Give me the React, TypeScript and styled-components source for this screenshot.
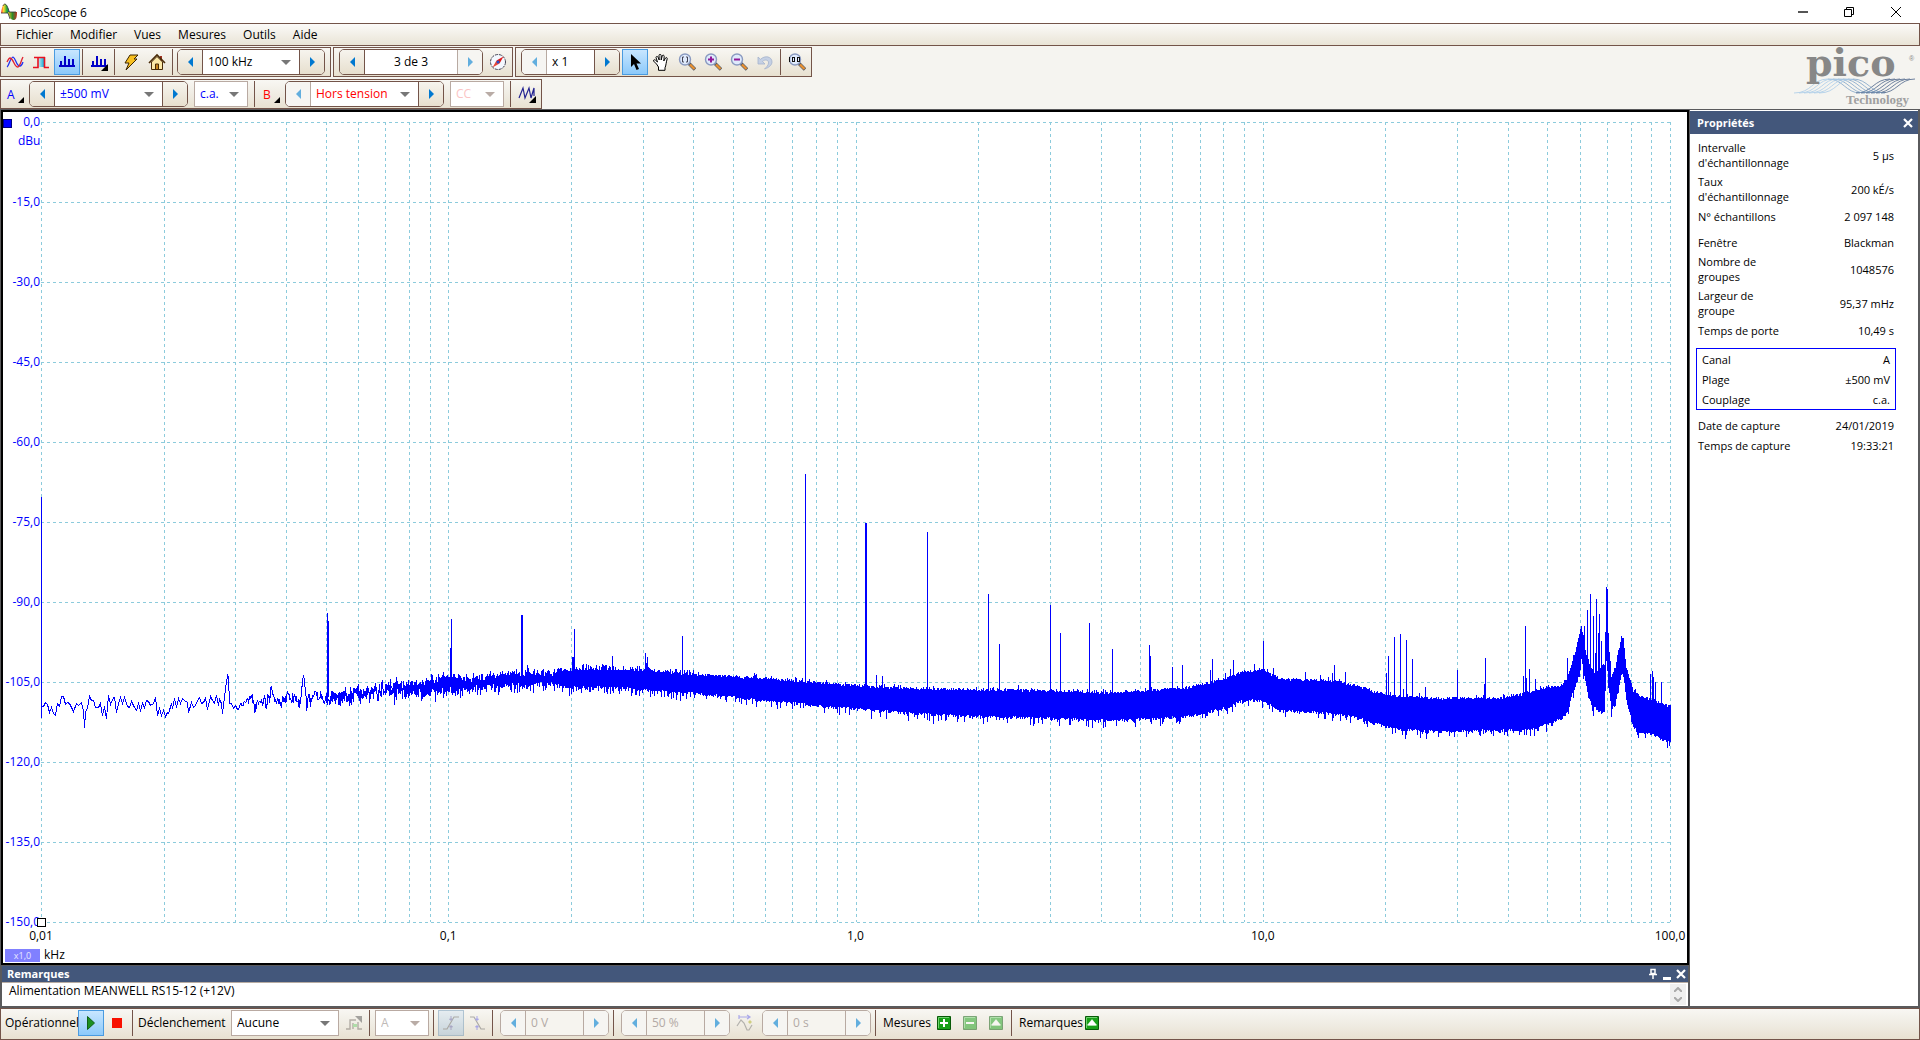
import React from 'react';
import styled, { createGlobalStyle, css } from 'styled-components';

const color = {
  line: '#735449',
  soft: '#b8aaa2',
  blue: '#0000ff',
  red: '#ff0000',
  header: '#43577b',
  frame: '#5a5a5c',
  arrow: '#0078d0',
  arrowOff: '#62aede',
};

const GlobalStyle = createGlobalStyle`
  * { box-sizing: border-box; }
  body { margin: 0; background: #f5f4f0; }
  body, button, input, select, textarea {
    font-family: "Segoe UI", "Open Sans", "Noto Sans", sans-serif;
    font-size: 12px;
    line-height: 16px;
    color: #000;
  }
  button, input, select, textarea { margin: 0; border: 0; padding: 0; background: none; border-radius: 0; }
  svg { display: block; }
`;

const barFill = css`
  background: linear-gradient(#f8f7f3, #eeeae0 60%, #e8e1d0);
`;

/* ---------- window frame ---------- */

const Window = styled.div`
  height: 100vh;
  min-height: 600px;
  display: flex;
  flex-direction: column;
`;

const TitleBar = styled.header`
  display: flex;
  align-items: center;
  height: 23px;
  background: #fff;
`;

const Title = styled.h1`
  flex: 1;
  margin: 0;
  padding: 2px 0 0 3px;
  font-size: 12px;
  font-weight: 400;
`;

const WindowButton = styled.button`
  display: grid;
  place-items: center;
  width: 46px;
  height: 22px;

  &:last-child { width: 48px; }
`;

const MenuBar = styled.nav`
  display: flex;
  height: 23px;
  padding-left: 6px;
  border: 1px solid ${color.line};
  background: linear-gradient(#fbfaf8, #e9e4d6);
`;

const MenuItem = styled.button`
  padding: 0 8px 0 9px;
`;

/* ---------- toolbars ---------- */

const ToolArea = styled.div`
  display: flex;
  justify-content: space-between;
  height: 63px;
  padding-top: 1px;
`;

const ToolRows = styled.div`
  display: flex;
  flex-direction: column;
  gap: 2px;
`;

const ToolRow = styled.div`
  display: flex;
  gap: 2px;
`;

const Toolbar = styled.div`
  ${barFill}
  display: flex;
  align-items: center;
  height: 30px;
  padding: 0 1px;
  border: 1px solid ${color.line};
`;

const ToolPad = styled.i<{ $w?: number }>`
  flex: none;
  width: ${p => p.$w ?? 4}px;
`;

const ToolButton = styled.button<{ $on?: boolean; $dim?: boolean }>`
  flex: none;
  display: grid;
  place-items: center;
  width: 26px;
  height: 26px;
  border: 1px solid ${p => (p.$on ? '#4a9be0' : 'transparent')};
  background: ${p => (p.$on ? 'linear-gradient(#c8e6ff, #8cc9fa)' : 'none')};
  opacity: ${p => (p.$dim ? 0.5 : 1)};
  filter: ${p => (p.$dim && p.$on ? 'saturate(0.5)' : 'none')};
`;

const ChannelButton = styled.button<{ $ink: string }>`
  display: flex;
  align-items: flex-end;
  gap: 3px;
  width: 27px;
  height: 26px;
  padding: 4px 0 4px 5px;
  color: ${p => p.$ink};
`;

const Corner = styled.i`
  border-left: 6px solid transparent;
  border-bottom: 6px solid #000;
`;

const Separator = styled.i<{ $after?: number }>`
  flex: none;
  width: 1px;
  height: 26px;
  margin: 0 ${p => p.$after ?? 3}px 0 2px;
  background: ${color.line};
`;

const StepperBox = styled.div<{ $w: number; $dim?: boolean }>`
  flex: none;
  display: flex;
  width: ${p => p.$w}px;
  height: 26px;
  margin-right: 2px;
  border: 1px solid ${p => (p.$dim ? color.soft : color.line)};
  border-radius: 5px;
  background: ${p => (p.$dim ? '#f6f4ef' : '#fff')};
  overflow: hidden;
`;

const StepButton = styled.button<{ $flip?: boolean; $dim?: boolean }>`
  flex: none;
  display: grid;
  place-items: center;
  width: 25px;
  background: ${p => (p.$dim ? '#f6f5f2' : 'linear-gradient(#f6f4ee, #e7dfce)')};
  border-${p => (p.$flip ? 'left' : 'right')}: 1px solid ${p => (p.$dim ? color.soft : color.line)};

  &::before {
    content: '';
    border: 5px solid transparent;
    border-${p => (p.$flip ? 'left' : 'right')}-color: ${p => (p.$dim ? color.arrowOff : color.arrow)};
    border-${p => (p.$flip ? 'right' : 'left')}-width: 0;
  }
`;

const Value = styled.input<{ $center?: boolean }>`
  flex: 1;
  min-width: 0;
  padding: 0 5px;
  text-align: ${p => (p.$center ? 'center' : 'left')};
  &:disabled { color: #b3aaa6; }
`;

const SelectShell = styled.div<{ $w?: number; $dim?: boolean }>`
  position: relative;
  display: flex;
  flex: ${p => (p.$w ? 'none' : '1')};
  width: ${p => (p.$w ? `${p.$w}px` : 'auto')};
  height: ${p => (p.$w ? '26px' : 'auto')};
  border: ${p => (p.$w ? '1px solid #b9aaa2' : '0')};
  background: #fff;

  &::after {
    content: '';
    position: absolute;
    right: 8px;
    top: 10px;
    border: 5px solid transparent;
    border-top-color: ${p => (p.$dim ? '#b9aca6' : '#777')};
    border-bottom-width: 0;
    pointer-events: none;
  }
`;

const Select = styled.select<{ $ink?: string }>`
  appearance: none;
  flex: 1;
  min-width: 0;
  padding: 0 20px 0 5px;
  color: ${p => p.$ink || '#000'};
  opacity: 1;
`;

const Logo = styled.svg`
  width: 130px;
  height: 60px;
  overflow: visible;
`;

/* ---------- workspace ---------- */

const Workspace = styled.main`
  flex: 1;
  min-height: 0;
  display: grid;
  grid-template-columns: minmax(0, 1fr) 228px;
  gap: 1px;
  padding: 1px 2px 2px 1px;
  background: ${color.frame};
`;

const ScopeColumn = styled.div`
  display: flex;
  flex-direction: column;
  gap: 1px;
  min-height: 0;
`;

const ScopeView = styled.section`
  flex: 1;
  min-height: 0;
  position: relative;
  display: grid;
  grid-template-columns: 38px minmax(0, 1fr) 17px;
  grid-template-rows: 10px minmax(0, 1fr) 41px;
  border: 2px solid #000;
  background: #fff;
`;

const YAxis = styled.div`
  grid-area: 2 / 1;
  display: flex;
  flex-direction: column;
  justify-content: space-between;
  align-items: flex-end;
  padding-right: 1px;
  color: ${color.blue};
`;

const YTick = styled.span`
  display: flex;
  align-items: center;
  height: 0;
`;

const YUnit = styled.span`
  position: absolute;
  left: 15px;
  top: 21px;
  color: ${color.blue};
`;

const PlotCell = styled.div`
  grid-area: 2 / 2;
  position: relative;
  min-height: 0;
`;

const Plot = styled.svg`
  width: 100%;
  height: 100%;
  overflow: visible;
`;

const ChannelMark = styled.i`
  position: absolute;
  left: 0;
  top: 7px;
  width: 9px;
  height: 9px;
  border: 1px solid #000080;
  background: ${color.blue};
`;

const OriginMark = styled.i`
  position: absolute;
  left: -4px;
  bottom: -5px;
  width: 9px;
  height: 9px;
  border: 1px solid #000;
  background: #fff;
`;

const XAxis = styled.div`
  grid-area: 3 / 2;
  display: flex;
  justify-content: space-between;
  padding-top: 6px;
`;

const XTick = styled.span`
  display: flex;
  justify-content: center;
  width: 0;
`;

const XUnit = styled.div`
  grid-area: 3 / 1 / 4 / 3;
  align-self: end;
  display: flex;
  align-items: center;
  gap: 4px;
  padding-left: 2px;
`;

const Factor = styled.button`
  width: 35px;
  height: 13px;
  background: #8080ff;
  color: #e8e8ff;
  font-size: 9px;
  line-height: 13px;
`;

const Notes = styled.section`
  flex: none;
  margin: 0 1px;
`;

const PaneHeader = styled.div<{ $h: number; $pad: number }>`
  display: flex;
  align-items: center;
  justify-content: space-between;
  height: ${p => p.$h}px;
  padding: 0 0 0 ${p => p.$pad}px;
  background: ${color.header};
  color: #fff;
`;

const PaneTitle = styled.h2`
  margin: 0;
  font-size: 11px;
  font-weight: 700;
`;

const PaneButtons = styled.div`
  display: flex;
`;

const PaneButton = styled.button`
  display: grid;
  place-items: center;
  width: 14px;
  height: 14px;
`;

const NotesBody = styled.div`
  display: flex;
  height: 24px;
  border-top: 1px solid #b8aca2;
  background: #fff;
`;

const NotesText = styled.textarea`
  flex: 1;
  height: 22px;
  padding: 0 7px;
  resize: none;
  overflow: hidden;
`;

const Scroller = styled.div`
  display: flex;
  flex-direction: column;
  justify-content: space-between;
  width: 16px;
  margin: 1px 2px 1px 0;
  background: #f0f0f0;
`;

const ScrollButton = styled.button`
  display: grid;
  place-items: center;
  height: 11px;
`;

const Properties = styled.aside`
  padding-top: 1px;
  background: #fff;
`;

const PropList = styled.dl`
  margin: 0;
  padding: 4px 0 0 6px;
  width: 206px;
  font-size: 11px;
  line-height: 15px;
`;

const PropGroup = styled.div<{ $boxed?: boolean; $gap: number }>`
  margin-top: ${p => p.$gap}px;
  padding: ${p => (p.$boxed ? '0 5px' : '0 2px')};
  border: ${p => (p.$boxed ? `1px solid ${color.blue}` : '0')};
`;

const PropRow = styled.div<{ $tall?: boolean }>`
  display: flex;
  align-items: center;
  justify-content: space-between;
  height: ${p => (p.$tall ? 34 : 20)}px;
`;

const PropName = styled.dt`
  width: 93px;
`;

const PropValue = styled.dd`
  margin: 0;
`;

/* ---------- status bar ---------- */

const StatusBar = styled.footer`
  ${barFill}
  flex: none;
  display: flex;
  align-items: center;
  height: 32px;
  padding: 0 4px 2px;
  border: 1px solid ${color.line};
  white-space: nowrap;
`;

const StatusText = styled.label<{ $w: number }>`
  flex: none;
  width: ${p => p.$w}px;
`;

/* ---------- icons ---------- */

const Icon = ({ size = 18, children }: { size?: number; children: React.ReactNode }) => (
  <svg width={size} height={size} viewBox={`0 0 ${size} ${size}`} fill="none" aria-hidden="true">
    {children}
  </svg>
);

const AppIcon = () => (
  <svg width="17" height="18" viewBox="0 0 17 18" aria-hidden="true">
    <defs>
      <linearGradient id="crest">
        <stop offset="0" stopColor="#f33" />
        <stop offset="0.3" stopColor="#fd3" />
        <stop offset="0.65" stopColor="#2a3" />
        <stop offset="1" stopColor="#1a56c0" />
      </linearGradient>
      <linearGradient id="trough">
        <stop offset="0" stopColor="#e8d020" />
        <stop offset="0.5" stopColor="#2c8a2c" />
        <stop offset="1" stopColor="#c03020" />
      </linearGradient>
    </defs>
    <path d="M1 10C2 4 3 1 5 1s3 4 5 9z" fill="url(#crest)" />
    <path d="M8 9h9c0 6-1 8-3.500 8S9 14 8 9z" fill="url(#trough)" />
    <path d="M1 10h7l2 6M3 3c1-3 3-2 4 0 1 2 2 4 2 6h7" fill="none" stroke="#333" strokeWidth=".8" />
  </svg>
);

const WaveIcon = () => (
  <Icon>
    <path d="M1 14C3 13 4 5 7 4c3 1 3 9 7 9 1 0 2-1 3-4" stroke="#2030f0" strokeWidth="1.300" />
    <path d="M1 9c1-2 2-4 3-4 4 1 4 9 8 9 2-1 3-6 5-10" stroke="#e02030" strokeWidth="1.300" />
  </Icon>
);

const PersistIcon = () => (
  <Icon>
    <defs>
      <linearGradient id="persist">
        <stop offset="0" stopColor="#d8e8f0" />
        <stop offset="1" stopColor="#10b0d8" />
      </linearGradient>
    </defs>
    <path d="M6 4h6v10H6z" fill="url(#persist)" />
    <path d="M1 14.500h5V4M2 4.500h11M12.500 4v10.500H17" stroke="#e81020" strokeWidth="1.600" />
  </Icon>
);

const Bars = ({ menu }: { menu?: boolean }) => (
  <Icon>
    <path
      d="M1 13h16M3 12V8M7 12V3M11 12V6M15 12V6"
      stroke="#0000c8"
      strokeWidth="2"
      shapeRendering="crispEdges"
    />
    {menu && <path d="M18 11v7h-7z" fill="#000" />}
  </Icon>
);

const BoltIcon = () => (
  <Icon>
    <path d="M8 2h8l-4 4h3L4 17l3-7H3z" fill="#f8c020" stroke="#3a2400" />
  </Icon>
);

const HomeIcon = () => (
  <Icon>
    <path d="M13 3v5" stroke="#a03020" strokeWidth="2" />
    <path d="M3.500 9v7.500h11V9L9 3.500z" fill="#fbe9a8" stroke="#4a2c08" />
    <path d="M1 10l8-8 8 8" stroke="#4a2c08" strokeWidth="1.600" />
    <path d="M7.500 16v-5h3v5" fill="#c88820" stroke="#4a2c08" />
  </Icon>
);

const CompassIcon = () => (
  <Icon>
    <circle cx="9" cy="9" r="7.500" fill="#f4f8ff" stroke="#445" strokeWidth="1" strokeDasharray="3 1" />
    <path d="M14.500 3.500l-4 7-3-3z" fill="#e01818" />
    <path d="M3.500 14.500l4-7 3 3z" fill="#e84838" />
    <circle cx="9" cy="9" r="1.500" fill="#2050d0" />
  </Icon>
);

const PointerIcon = () => (
  <Icon>
    <path d="M5 1v13l3-3 2.500 6 2.500-1-2.500-5.500H15z" fill="#000" />
  </Icon>
);

const HandIcon = () => (
  <Icon>
    <path
      d="M4.500 11L1.500 8c0-1.500 1-1.500 2-.8L5.500 9 4 4.500c0-1.200 1.500-1.500 2-.3L7.200 7 7 2.500C7 1 9 1 9.200 2.500V7l1-4c.3-1.300 2-1 2 .3L11.800 8l1.700-3c.8-1 2-.3 1.700.8-1 3-1.200 7-2.200 9v2.500H6.500V14z"
      fill="#fff"
      stroke="#000"
      strokeWidth="1"
    />
  </Icon>
);

const ZoomIcon = ({ kind }: { kind: 'fit' | 'in' | 'out' | 'all' }) => (
  <Icon>
    <path d="M11 10.500l6 6" stroke="#555a66" strokeWidth="3.600" />
    <path d="M12 11.500l4.500 4.500" stroke="#e89030" strokeWidth="2.400" />
    <circle cx="7" cy="6.500" r="5.500" fill="#dfeafc" stroke="#8a9ac0" strokeWidth="1.400" />
    {kind === 'in' && <path d="M4 6.500h6M7 3.500v6" stroke="#901898" strokeWidth="2" />}
    {kind === 'out' && <path d="M4 6.500h6" stroke="#901898" strokeWidth="2" />}
    {kind === 'fit' && <path d="M6 4H4.500v5H6M8 4h1.500v5H8" stroke="#445" />}
    {kind === 'all' && (
      <path
        d="M1.500 4v5M4.500 4.500h2v4h-2zM9.500 4.500h2v4h-2z"
        stroke="#111"
        strokeWidth="1"
        shapeRendering="crispEdges"
      />
    )}
  </Icon>
);

const UndoIcon = () => (
  <Icon>
    <path
      d="M2 4v7h7L6.500 8.500C9 6 13 7 12.500 10c-.2 2.500-2 4-4 6 5-1.500 7.500-4.500 7.500-7 0-5.500-7-7-11.500-2.700z"
      fill="#c5d0e4"
      stroke="#a5b3cc"
      strokeWidth=".8"
    />
  </Icon>
);

const MathIcon = () => (
  <Icon>
    <path d="M1 13L5 3l2 10L11 3l2 10 3-10v8" stroke="#202090" strokeWidth="1.200" />
    <path d="M18 11v7h-7z" fill="#000" />
  </Icon>
);

const PlayIcon = () => (
  <Icon>
    <path d="M5.500 2.500v13l7-6.500z" fill="#1c9020" stroke="#116016" />
  </Icon>
);

const StopIcon = () => (
  <Icon>
    <path d="M4 4h10v10H4z" fill="#f81000" />
  </Icon>
);

const TriggerIcon = () => (
  <Icon>
    <path d="M1 15h4V6h6M8 15V9M13 8v7h4" stroke="#77706a" strokeWidth="1.400" />
    <path d="M10 2h7v7z" fill="#555" />
    <path d="M8 10h4v3H8z" fill="#70d070" />
  </Icon>
);

const EdgeIcon = ({ falling }: { falling?: boolean }) => (
  <Icon>
    <path d={falling ? 'M2 3h4l7 12h4' : 'M1 15h4l7-12h5'} stroke="#666" strokeWidth="1.200" />
    <path d="M9 2v4M9 12v4M7.500 5h3L9 6.500zM7.500 13h3L9 11.500z" fill="#6060e8" stroke="#6060e8" />
  </Icon>
);

const DelayIcon = () => (
  <Icon>
    <path d="M1 12l4-6 3 3 3 7h2l3-5" stroke="#777" strokeWidth="1.200" />
    <path d="M3 3h11M11 1l3 2-3 2M3 1v4" stroke="#6060e8" strokeWidth="1.200" />
    <path d="M12 8l2-2 2 2-2 2z" fill="#b0b020" />
  </Icon>
);

const GreenIcon = ({ kind }: { kind: 'plus' | 'minus' | 'up' }) => (
  <Icon>
    <path d="M2.500 2.500h13v13h-13z" fill="#18a018" stroke="#085a08" />
    <path d="M3.500 14V3.500H14" stroke="#70d070" />
    {kind === 'plus' && <path d="M5 9h8M9 5v8" stroke="#fff" strokeWidth="2" />}
    {kind === 'minus' && <path d="M5 9h8" stroke="#fff" strokeWidth="2" />}
    {kind === 'up' && <path d="M9 5.500l4.500 5.500h-9zM4.500 11.500h9" fill="#fff" stroke="#fff" strokeWidth=".5" />}
  </Icon>
);

const CloseIcon = ({ size = 12 }: { size?: number }) => (
  <svg width={size} height={size} viewBox="0 0 12 12" stroke="#fff" strokeWidth="2.200" aria-hidden="true">
    <path d="M2 2l8 8M10 2l-8 8" />
  </svg>
);

/* ---------- spectrum ---------- */

const PLOT_W = 1629;
const PLOT_H = 800;
const LEFT = 41;
const TOP = 122;
const BAND_START = 385;

/* x, upper edge, lower edge of the noise band */
const band: number[][] = [
  [385, 686, 690], [400, 684, 692], [425, 683, 693], [449, 676, 690], [465, 678, 691], [490, 675, 688],
  [530, 672, 686], [571, 671, 686], [600, 670, 686], [640, 672, 688],
  [695, 676, 692], [750, 679, 698], [804, 683, 703], [857, 687, 708], [914, 690, 712], [969, 691, 715],
  [1051, 692, 717], [1106, 694, 719], [1161, 691, 717], [1188, 689, 715], [1205, 685, 712], [1227, 679, 706],
  [1243, 673, 699], [1262, 671, 699], [1279, 680, 709], [1298, 681, 710], [1331, 682, 712], [1358, 687, 716],
  [1372, 693, 722], [1397, 698, 728], [1435, 700, 730], [1500, 699, 729], [1520, 696, 729], [1540, 690, 725],
  [1560, 687, 718], [1567, 680, 712], [1572, 663, 693], [1577, 645, 680], [1581, 627, 658], [1585, 652, 680],
  [1588, 662, 696], [1593, 675, 706], [1600, 670, 710], [1604, 668, 710], [1606, 630, 660], [1608, 643, 680],
  [1611, 678, 708], [1615, 668, 703], [1618, 653, 687], [1621, 638, 673], [1623, 639, 675], [1626, 670, 700],
  [1633, 692, 726], [1637, 696, 730], [1643, 699, 732], [1653, 701, 733], [1660, 705, 738], [1670, 708, 741],
];

/* x, centre of the single-line trace at the low end */
const centre: number[][] = [
  [237, 703], [286, 698], [326, 697], [367, 693], [388, 688], [428, 687], [449, 682],
];

const lowEnd =
  '41,706 43,706 45,702 47,704 49,712 51,707 53,713 55,715 57,703 59,706 61,696 63,696 65,704 67,702 69,703 73,711 76,703 78,705 81,702 83,710 84,727 85,712 87,707 89,696 91,700 93,700 95,707 98,707 100,703 102,715 104,706 106,718 108,695 110,704 113,697 114,697 116,712 118,703 120,697 122,703 124,697 127,706 129,707 131,701 134,707 136,710 138,703 140,710 142,703 144,707 146,700 148,701 150,705 153,703 155,697 157,715 159,708 161,715 163,710 165,716 167,712 168,713 171,703 172,708 174,698 176,707 178,698 180,703 182,698 184,700 187,702 188,712 191,702 193,707 195,705 197,700 199,697 201,703 203,702 205,698 207,709 210,696 212,700 214,703 216,695 218,705 219,699 221,703 222,713 224,697 225,688 227,675 228,677 229,703 231,703 233,708 235,705';

/* x, peak */
const peaks: number[][] = [
  [451, 619], [450, 648], [521, 615], [522, 615], [527, 665], [574, 629], [573, 657], [572, 657], [612, 656],
  [645, 653], [646, 663], [647, 657], [682, 636], [805, 474], [865, 523], [866, 523], [876, 675], [882, 676],
  [927, 532], [988, 594], [999, 644], [1050, 605], [1060, 633], [1089, 623], [1112, 649], [1149, 645],
  [1150, 656], [1172, 667], [1182, 665], [1210, 670], [1212, 659], [1230, 669], [1233, 660], [1263, 641],
  [1254, 664], [1273, 668], [1305, 672], [1320, 675], [1334, 665], [1332, 673], [1345, 672], [1386, 673],
  [1388, 656], [1394, 637], [1400, 634], [1406, 640], [1412, 659], [1403, 689], [1425, 687], [1457, 670],
  [1484, 684], [1485, 658], [1523, 676], [1525, 626], [1526, 678], [1529, 669], [1535, 679], [1567, 658],
  [1584, 626], [1587, 610], [1590, 594], [1593, 616], [1595, 653], [1596, 599], [1598, 633], [1599, 614],
  [1601, 641], [1605, 632], [1606, 587], [1607, 589], [1608, 633], [1650, 674], [1652, 671], [1653, 677],
  [1655, 682], [1661, 682],
];

function lookup(table: number[][], x: number, column: number) {
  let i = 1;
  while (i < table.length - 1 && table[i][0] < x) i++;
  const a = table[i - 1];
  const b = table[i];
  return a[column] + ((b[column] - a[column]) * (x - a[0])) / (b[0] - a[0]);
}

function makeRandom(seed: number) {
  let s = seed;
  return () => {
    s = (s * 1664525 + 1013904223) % 4294967296;
    return s / 4294967296;
  };
}

function buildTrace() {
  const rnd = makeRandom(20190124);
  const line = lowEnd.split(' ').map(p => {
    const [x, y] = p.split(',').map(Number);
    return `${x - LEFT + 0.5} ${y - TOP + 0.5}`;
  });
  let drift = 0;
  for (let x = 237; x < 449; x += x < 330 ? 0.7 : 0.3) {
    drift = drift * 0.35 + (rnd() + rnd() + rnd() - 1.5) * 8;
    let y = lookup(centre, x, 1) + drift;
    if (rnd() < 0.04) y += 6;
    if (Math.abs(x - 303) < 3) y = 673 + Math.abs(x - 303) * 9;
    line.push(`${(x - LEFT + 0.5).toFixed(1)} ${Math.round(y - TOP) + 0.5}`);
  }
  let columns = 'M.5 375V596M286.500 491V580M287.500 499V575';
  for (let x = BAND_START; x <= 1670; x++) {
    const rough = x < 700;
    let top = lookup(band, x, 1) - rnd() * 3;
    let bottom = lookup(band, x, 2) + rnd() * 3;
    if (rnd() < (rough ? 0.4 : 0.12)) top -= rnd() * 4;
    if (rnd() < (rough ? 0.4 : 0.25)) bottom += rnd() * 8;
    if (x < 560) {
      top += rnd() * 5;
      bottom -= rnd() * 5;
    }
    columns += `M${x - LEFT + 0.5} ${Math.round(top - TOP)}V${Math.round(bottom - TOP)}`;
  }
  peaks.forEach(([x, y]) => {
    columns += `M${x - LEFT + 0.5} ${y - TOP}V${Math.round(lookup(band, x, 1) - TOP) + 6}`;
  });
  return { line: `M${line.join('L')}`, columns };
}

const trace = buildTrace();

const gridX: number[] = [];
for (let d = 0; d < 4; d++) {
  for (let n = 1; n < 10; n++) gridX.push(Math.round((d + Math.log10(n)) * (PLOT_W / 4)));
}
gridX.push(PLOT_W);
const gridPath =
  gridX.map(x => `M${x + 0.5} 0V${PLOT_H}`).join('') +
  Array.from({ length: 11 }, (_, i) => `M0 ${i * 80 + 0.5}H${PLOT_W}`).join('');

const yTicks = ['0,0', '-15,0', '-30,0', '-45,0', '-60,0', '-75,0', '-90,0', '-105,0', '-120,0', '-135,0', '-150,0'];
const xTicks = ['0,01', '0,1', '1,0', '10,0', '100,0'];

type Prop = [string, string, boolean?];
const groups: { gap: number; boxed?: boolean; rows: Prop[] }[] = [
  {
    gap: 0,
    rows: [
      ["Intervalle d'échantillonnage", '5 µs', true],
      ["Taux d'échantillonnage", '200 kÉ/s', true],
      ['N° échantillons', '2 097 148'],
    ],
  },
  {
    gap: 6,
    rows: [
      ['Fenêtre', 'Blackman'],
      ['Nombre de groupes', '1048576', true],
      ['Largeur de groupe', '95,37 mHz', true],
      ['Temps de porte', '10,49 s'],
    ],
  },
  { gap: 8, boxed: true, rows: [['Canal', 'A'], ['Plage', '±500 mV'], ['Couplage', 'c.a.']] },
  { gap: 5, rows: [['Date de capture', '24/01/2019'], ['Temps de capture', '19:33:21']] },
];

/* ---------- controls ---------- */

interface DropProps {
  label: string;
  value: string;
  w?: number;
  ink?: string;
  dim?: boolean;
  id?: string;
}

const Drop = ({ label, value, w, ink, dim, id }: DropProps) => (
  <SelectShell $w={w} $dim={dim}>
    <Select id={id} aria-label={label} $ink={ink} disabled={dim}>
      <option>{value}</option>
    </Select>
  </SelectShell>
);

interface StepperProps {
  label: string;
  w: number;
  dim?: boolean;
  offBack?: boolean;
  offNext?: boolean;
  children: React.ReactNode;
}

const Stepper = ({ label, w, dim, offBack, offNext, children }: StepperProps) => (
  <StepperBox $w={w} $dim={dim} role="group" aria-label={label}>
    <StepButton aria-label="Précédent" $dim={dim || offBack} disabled={dim || offBack} />
    {children}
    <StepButton aria-label="Suivant" $flip $dim={dim || offNext} disabled={dim || offNext} />
  </StepperBox>
);

const Spectrum = () => (
  <ScopeView aria-label="Spectre">
    <ChannelMark />
    <YAxis>
      {yTicks.map(t => (
        <YTick key={t}>{t}</YTick>
      ))}
    </YAxis>
    <YUnit>dBu</YUnit>
    <PlotCell>
      <Plot viewBox={`0 0 ${PLOT_W} ${PLOT_H}`} preserveAspectRatio="none" fill="none">
        <path d={gridPath} stroke="#8ccbdc" strokeDasharray="3 3" shapeRendering="crispEdges" />
        <path d={trace.line} stroke={color.blue} shapeRendering="crispEdges" />
        <path d={trace.columns} stroke={color.blue} shapeRendering="crispEdges" />
      </Plot>
      <OriginMark />
    </PlotCell>
    <XAxis>
      {xTicks.map(t => (
        <XTick key={t}>{t}</XTick>
      ))}
    </XAxis>
    <XUnit>
      <Factor>x1,0</Factor>
      kHz
    </XUnit>
  </ScopeView>
);

const PicoLogo = () => (
  <Logo viewBox="0 0 130 60" role="img" aria-label="pico Technology">
    <g fill="none" strokeWidth=".8">
      {[0, 5, 10, 15, 20, 25].map(o => (
        <g key={o}>
          <path d={`M${4 + o} 46c18 0 18-14 34-14`} stroke="#a9cbe8" />
          <path d={`M${38 + o} 32c15 0 18 14 32 14`} stroke="#7fa3c8" />
          <path d={`M${66 + o} 46c16 0 18-14 34-14`} stroke="#4a6288" />
        </g>
      ))}
    </g>
    <text x="16" y="29" fontFamily="DejaVu Serif, serif" fontSize="38" fontWeight="700" fill="#878787">
      pico
    </text>
    <text x="56" y="57" fontFamily="Liberation Serif, serif" fontSize="13" fontWeight="700" fill="#a0a0a0">
      Technology
    </text>
    <text x="119" y="14" fontFamily="Liberation Sans, sans-serif" fontSize="7" fill="#878787">
      ®
    </text>
  </Logo>
);

export default function App() {
  return (
    <Window>
      <GlobalStyle />
      <TitleBar>
        <AppIcon />
        <Title>PicoScope 6</Title>
        <WindowButton aria-label="Réduire">
          <svg width="10" height="10" stroke="#555" strokeWidth="2"><path d="M0 5h10" /></svg>
        </WindowButton>
        <WindowButton aria-label="Restaurer">
          <svg width="10" height="10" fill="none" stroke="#000"><path d="M.5 2.500h7v7h-7zM2.500 2V.5h7v7H8" /></svg>
        </WindowButton>
        <WindowButton aria-label="Fermer">
          <svg width="10" height="10" stroke="#000"><path d="M0 0l10 10M10 0L0 10" /></svg>
        </WindowButton>
      </TitleBar>
      <MenuBar>
        {['Fichier', 'Modifier', 'Vues', 'Mesures', 'Outils', 'Aide'].map(m => (
          <MenuItem key={m}>{m}</MenuItem>
        ))}
      </MenuBar>

      <ToolArea>
        <ToolRows>
          <ToolRow>
            <Toolbar>
              <ToolButton aria-label="Oscilloscope"><WaveIcon /></ToolButton>
              <ToolButton aria-label="Persistance"><PersistIcon /></ToolButton>
              <ToolButton aria-label="Spectre" $on><Bars /></ToolButton>
              <Separator />
              <ToolButton aria-label="Options du spectre"><Bars menu /></ToolButton>
              <Separator />
              <ToolButton aria-label="Configuration auto"><BoltIcon /></ToolButton>
              <ToolButton aria-label="Accueil"><HomeIcon /></ToolButton>
              <Separator $after={4} />
              <Stepper label="Plage de fréquence" w={148}>
                <Drop label="Fréquence" value="100 kHz" />
              </Stepper>
              <ToolPad $w={2} />
            </Toolbar>
            <Toolbar>
              <ToolPad />
              <Stepper label="Tampon" w={144} offNext>
                <Value aria-label="Tampon" defaultValue="3 de 3" $center />
              </Stepper>
              <ToolButton aria-label="Navigateur"><CompassIcon /></ToolButton>
            </Toolbar>
            <Toolbar>
              <ToolPad />
              <Stepper label="Zoom" w={99} offBack>
                <Value aria-label="Facteur de zoom" defaultValue="x 1" />
              </Stepper>
              <ToolButton aria-label="Sélection" $on><PointerIcon /></ToolButton>
              <ToolButton aria-label="Main"><HandIcon /></ToolButton>
              <ToolButton aria-label="Zoom fenêtre"><ZoomIcon kind="fit" /></ToolButton>
              <ToolButton aria-label="Zoom avant"><ZoomIcon kind="in" /></ToolButton>
              <ToolButton aria-label="Zoom arrière"><ZoomIcon kind="out" /></ToolButton>
              <ToolButton aria-label="Annuler" disabled><UndoIcon /></ToolButton>
              <Separator />
              <ToolButton aria-label="Zoom 100"><ZoomIcon kind="all" /></ToolButton>
            </Toolbar>
          </ToolRow>
          <ToolRow>
            <Toolbar>
              <ChannelButton $ink={color.blue}>A<Corner /></ChannelButton>
              <Stepper label="Plage A" w={159}>
                <Drop label="Plage du canal A" value="±500 mV" ink={color.blue} />
              </Stepper>
              <ToolPad />
              <Drop label="Couplage A" value="c.a." w={54} ink={color.blue} />
              <ToolPad />
              <Separator />
              <ChannelButton $ink={color.red}>B<Corner /></ChannelButton>
              <Stepper label="Plage B" w={159} offBack>
                <Drop label="Plage du canal B" value="Hors tension" ink={color.red} />
              </Stepper>
              <ToolPad />
              <Drop label="Couplage B" value="CC" w={54} ink="#fbc4c4" dim />
              <ToolPad />
              <Separator />
              <ToolButton aria-label="Canaux mathématiques"><MathIcon /></ToolButton>
            </Toolbar>
          </ToolRow>
        </ToolRows>
        <PicoLogo />
      </ToolArea>

      <Workspace>
        <ScopeColumn>
          <Spectrum />
          <Notes>
            <PaneHeader $h={16} $pad={5}>
              <PaneTitle>Remarques</PaneTitle>
              <PaneButtons>
                <PaneButton aria-label="Épingler">
                  <svg width="10" height="12" fill="none" stroke="#fff" strokeWidth="1.500"><path d="M3 1.500h4v4H3zM1 6.500h8M5 6v5" /></svg>
                </PaneButton>
                <PaneButton aria-label="Réduire">
                  <svg width="8" height="12" fill="#fff"><path d="M0 9h8v3H0z" /></svg>
                </PaneButton>
                <PaneButton aria-label="Fermer"><CloseIcon /></PaneButton>
              </PaneButtons>
            </PaneHeader>
            <NotesBody>
              <NotesText aria-label="Remarques" defaultValue="Alimentation MEANWELL RS15-12 (+12V)" />
              <Scroller>
                <ScrollButton aria-label="Défiler vers le haut">
                  <svg width="8" height="5" fill="none" stroke="#aaa" strokeWidth="2"><path d="M0 5l4-4 4 4" /></svg>
                </ScrollButton>
                <ScrollButton aria-label="Défiler vers le bas">
                  <svg width="8" height="5" fill="none" stroke="#aaa" strokeWidth="2"><path d="M0 0l4 4 4-4" /></svg>
                </ScrollButton>
              </Scroller>
            </NotesBody>
          </Notes>
        </ScopeColumn>
        <Properties>
          <PaneHeader $h={23} $pad={7}>
            <PaneTitle>Propriétés</PaneTitle>
            <PaneButtons>
              <PaneButton aria-label="Fermer les propriétés"><CloseIcon size={12} /></PaneButton>
              <ToolPad $w={3} />
            </PaneButtons>
          </PaneHeader>
          <PropList>
            {groups.map((g, i) => (
              <PropGroup key={i} $gap={g.gap} $boxed={g.boxed}>
                {g.rows.map(([name, value, tall]) => (
                  <PropRow key={name} $tall={tall}>
                    <PropName>{name}</PropName>
                    <PropValue>{value}</PropValue>
                  </PropRow>
                ))}
              </PropGroup>
            ))}
          </PropList>
        </Properties>
      </Workspace>

      <StatusBar>
        <StatusText as="span" $w={73}>Opérationnel</StatusText>
        <ToolButton aria-label="Démarrer" $on><PlayIcon /></ToolButton>
        <ToolButton aria-label="Arrêter"><StopIcon /></ToolButton>
        <Separator $after={5} />
        <StatusText $w={93} htmlFor="trigger">Déclenchement</StatusText>
        <Drop id="trigger" label="Déclenchement" value="Aucune" w={108} />
        <ToolPad $w={2} />
        <ToolButton aria-label="Déclenchement avancé" disabled $dim><TriggerIcon /></ToolButton>
        <Separator $after={5} />
        <Drop label="Canal de déclenchement" value="A" w={54} ink="#c0bab8" dim />
        <ToolPad $w={2} />
        <Separator $after={4} />
        <ToolButton aria-label="Front montant" disabled $on $dim><EdgeIcon /></ToolButton>
        <ToolButton aria-label="Front descendant" disabled $dim><EdgeIcon falling /></ToolButton>
        <Separator $after={7} />
        <Stepper label="Seuil" w={109} dim>
          <Value aria-label="Seuil" defaultValue="0 V" disabled />
        </Stepper>
        <Separator $after={7} />
        <Stepper label="Pré-déclenchement" w={109} dim>
          <Value aria-label="Pré-déclenchement" defaultValue="50 %" disabled />
        </Stepper>
        <ToolButton aria-label="Retard" disabled $dim><DelayIcon /></ToolButton>
        <ToolPad />
        <Stepper label="Retard" w={109} dim>
          <Value aria-label="Valeur du retard" defaultValue="0 s" disabled />
        </Stepper>
        <Separator $after={7} />
        <StatusText as="span" $w={48}>Mesures</StatusText>
        <ToolButton aria-label="Ajouter une mesure"><GreenIcon kind="plus" /></ToolButton>
        <ToolButton aria-label="Supprimer une mesure" disabled $dim><GreenIcon kind="minus" /></ToolButton>
        <ToolButton aria-label="Modifier une mesure" disabled $dim><GreenIcon kind="up" /></ToolButton>
        <Separator $after={7} />
        <StatusText as="span" $w={60}>Remarques</StatusText>
        <ToolButton aria-label="Afficher les remarques"><GreenIcon kind="up" /></ToolButton>
      </StatusBar>
    </Window>
  );
}
